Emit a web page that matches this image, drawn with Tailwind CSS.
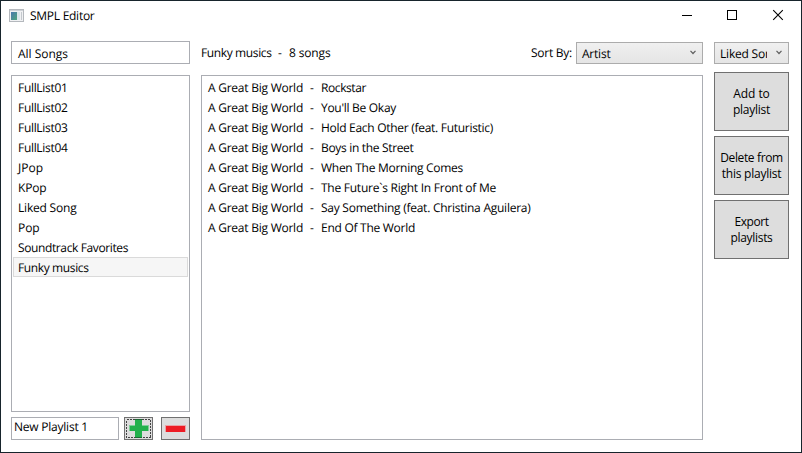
<!DOCTYPE html>
<html lang="en">
<head>
<meta charset="utf-8">
<title>SMPL Editor</title>
<script src="https://cdn.jsdelivr.net/npm/@tailwindcss/browser@4"></script>
</head>
<body class="w-[802px] h-[453px] overflow-hidden bg-white text-black font-['Open_Sans','Noto_Sans',sans-serif] text-[12px] leading-4 [text-rendering:geometricPrecision]">
<div class="w-[802px] h-[453px] border border-[#17242c] bg-white flex flex-col">
  <header class="h-[30px] flex items-center justify-between pl-2">
    <div class="flex items-center">
      <svg class="w-4 h-4" viewBox="0 -1 16 16" shape-rendering="crispEdges">
        <defs><linearGradient id="g" x1="0" y1="0" x2="1" y2="1"><stop offset="0" stop-color="#4a78ae"/><stop offset="1" stop-color="#4fa57c"/></linearGradient></defs>
        <rect x="0.5" y="0.5" width="14" height="12" fill="#f0f1f3" stroke="#b4b8bd"/>
        <rect x="1" y="1" width="13" height="1" fill="#cdd1d6"/>
        <rect x="2" y="3" width="6" height="8" fill="url(#g)"/>
        <rect x="8" y="3" width="3" height="8" fill="#dbe6ea"/>
        <rect x="12" y="3" width="1" height="8" fill="#c3c8cd"/>
      </svg>
      <span class="ml-[5px] whitespace-pre" data-w="64.5">SMPL Editor</span>
    </div>
    <div class="flex h-full -mr-px">
      <svg class="w-[46px] h-[30px]" viewBox="0 0 46 30" fill="none" stroke="#000"><path d="M18 14.5h10"/></svg>
      <svg class="w-[46px] h-[30px]" viewBox="0 0 46 30" fill="none" stroke="#000"><rect x="17.5" y="9.5" width="9" height="9"/></svg>
      <svg class="w-[46px] h-[30px]" viewBox="0 0 46 30" fill="none" stroke="#000" stroke-width="1.1"><path d="M17.2 9.2l9.6 9.6M26.8 9.2l-9.6 9.6"/></svg>
    </div>
  </header>
  <main class="flex-1 flex gap-[11px] pl-[10px] pr-3 pt-[10px] pb-3">
    <aside class="w-[179px] flex flex-col">
      <div class="h-[23px] border border-[#abadb3] pl-[6px] pt-[4px]"><span class="whitespace-pre" data-w="50">All Songs</span></div>
      <ul class="mt-[11px] h-[337px] border border-[#abadb3] p-px">
        <li class="h-5 pl-[5px] pt-[3px]"><span class="whitespace-pre" data-w="49.5">FullList01</span></li>
        <li class="h-5 pl-[5px] pt-[3px]"><span class="whitespace-pre" data-w="49.5">FullList02</span></li>
        <li class="h-5 pl-[5px] pt-[3px]"><span class="whitespace-pre" data-w="49.5">FullList03</span></li>
        <li class="h-5 pl-[5px] pt-[3px]"><span class="whitespace-pre" data-w="49.5">FullList04</span></li>
        <li class="h-5 pl-[5px] pt-[3px]"><span class="whitespace-pre" data-w="25">JPop</span></li>
        <li class="h-5 pl-[5px] pt-[3px]"><span class="whitespace-pre" data-w="28.5">KPop</span></li>
        <li class="h-5 pl-[5px] pt-[3px]"><span class="whitespace-pre" data-w="58.5">Liked Song</span></li>
        <li class="h-5 pl-[5px] pt-[3px]"><span class="whitespace-pre" data-w="21.5">Pop</span></li>
        <li class="h-5 pl-[5px] pt-[3px]"><span class="whitespace-pre" data-w="110">Soundtrack Favorites</span></li>
        <li class="h-5 pl-1 pt-[2px] border border-[#dadada] bg-[#f6f6f6]"><span class="whitespace-pre" data-w="70.5">Funky musics</span></li>
      </ul>
      <div class="mt-[5px] flex h-[23px]">
        <div class="w-[108px] border border-[#abadb3] pl-[2px] pt-px"><span class="whitespace-pre" data-w="74">New Playlist 1</span></div>
        <button class="ml-[5px] w-[29px] h-[23px]" aria-label="Add playlist"><svg class="block" width="29" height="23" viewBox="0 0 29 23" shape-rendering="crispEdges">
          <rect x=".5" y=".5" width="28" height="22" fill="#ddd" stroke="#707070"/>
          <path d="M11 2h7v6h7v6h-7v7h-7v-7H5V8h6z" fill="#7fce98"/>
          <path d="M11 3h7v6h6v5h-6v6h-7v-6H6V9h5z" fill="#22b14c"/>
          <rect x="2.5" y="2.5" width="24" height="18" fill="none" stroke="#444" stroke-dasharray="2 1"/>
          <path d="M11 2h7v1h-7zM11 20h7v1h-7z" fill="#1c6b34"/>
        </svg></button>
        <button class="ml-2 w-[29px] h-[23px]" aria-label="Remove playlist"><svg class="block" width="29" height="23" viewBox="0 0 29 23" shape-rendering="crispEdges">
          <rect x=".5" y=".5" width="28" height="22" fill="#ddd" stroke="#707070"/>
          <rect x="4" y="8" width="21" height="7" fill="#e9a3a6"/>
          <rect x="5" y="9" width="19" height="6" fill="#ed1c24"/>
        </svg></button>
      </div>
    </aside>
    <section class="w-[502px] flex flex-col">
      <div class="h-[23px] flex">
        <div class="flex pt-1 whitespace-pre"><span class="w-[77px]" data-w="70.5">Funky musics</span><span class="w-[11px]">-</span><span data-w="41.5">8 songs</span></div>
        <span class="ml-auto mr-1 self-start pt-1 whitespace-pre" data-w="41">Sort By:</span>
        <div class="mt-px w-[127px] h-[22px] border border-[#acacac] bg-linear-to-b from-[#f0f0f0] to-[#e5e5e5] pl-[5px] pr-[6px] flex justify-between">
          <span class="pt-[3px] whitespace-pre" data-w="28.5">Artist</span>
          <svg class="mt-[7px] w-[6px] h-[5px]" viewBox="0 0 6 5" fill="none" stroke="#606060" stroke-width="1.2"><path d="M.5 .8L3 3.5 5.5 .8"/></svg>
        </div>
      </div>
      <ul class="mt-[11px] h-[365px] border border-[#abadb3] p-px">
        <li class="h-5 flex pl-[5px] pt-[3px] whitespace-pre"><span class="w-[102px]" data-w="95">A Great Big World</span><span class="w-[11px]">-</span><span data-w="45">Rockstar</span></li>
        <li class="h-5 flex pl-[5px] pt-[3px] whitespace-pre"><span class="w-[102px]" data-w="95">A Great Big World</span><span class="w-[11px]">-</span><span data-w="75">You'll Be Okay</span></li>
        <li class="h-5 flex pl-[5px] pt-[3px] whitespace-pre"><span class="w-[102px]" data-w="95">A Great Big World</span><span class="w-[11px]">-</span><span data-w="172">Hold Each Other (feat. Futuristic)</span></li>
        <li class="h-5 flex pl-[5px] pt-[3px] whitespace-pre"><span class="w-[102px]" data-w="95">A Great Big World</span><span class="w-[11px]">-</span><span data-w="92.5">Boys in the Street</span></li>
        <li class="h-5 flex pl-[5px] pt-[3px] whitespace-pre"><span class="w-[102px]" data-w="95">A Great Big World</span><span class="w-[11px]">-</span><span data-w="142">When The Morning Comes</span></li>
        <li class="h-5 flex pl-[5px] pt-[3px] whitespace-pre"><span class="w-[102px]" data-w="95">A Great Big World</span><span class="w-[11px]">-</span><span data-w="175">The Future`s Right In Front of Me</span></li>
        <li class="h-5 flex pl-[5px] pt-[3px] whitespace-pre"><span class="w-[102px]" data-w="95">A Great Big World</span><span class="w-[11px]">-</span><span data-w="209.5">Say Something (feat. Christina Aguilera)</span></li>
        <li class="h-5 flex pl-[5px] pt-[3px] whitespace-pre"><span class="w-[102px]" data-w="95">A Great Big World</span><span class="w-[11px]">-</span><span data-w="94">End Of The World</span></li>
      </ul>
    </section>
    <aside class="w-[75px] flex flex-col gap-[5px] pt-px">
      <div class="mb-[3px] w-[75px] h-[22px] border border-[#acacac] bg-linear-to-b from-[#f0f0f0] to-[#e5e5e5] pl-[5px] pr-[6px] flex justify-between">
        <div class="w-[47px] overflow-hidden pt-[3px]"><span class="whitespace-pre" data-w="58.5">Liked Song</span></div>
        <svg class="mt-[7px] w-[6px] h-[5px]" viewBox="0 0 6 5" fill="none" stroke="#606060" stroke-width="1.2"><path d="M.5 .8L3 3.5 5.5 .8"/></svg>
      </div>
      <button class="h-[59px] border border-[#707070] bg-[#ddd] flex flex-col items-center justify-center pt-px"><span data-w="36.5">Add to</span><span data-w="37">playlist</span></button>
      <button class="h-[59px] border border-[#707070] bg-[#ddd] flex flex-col items-center justify-center pt-px whitespace-nowrap"><span data-w="62.5">Delete from</span><span data-w="59.5">this playlist</span></button>
      <button class="h-[59px] border border-[#707070] bg-[#ddd] flex flex-col items-center justify-center pt-px"><span data-w="34">Export</span><span data-w="42">playlists</span></button>
    </aside>
  </main>
</div>
<script>
// Track each label to its design width, again whenever styles or fonts arrive.
function fit() {
  document.querySelectorAll('[data-w]').forEach(function (el) {
    el.style.letterSpacing = '0px';
    var range = document.createRange();
    range.selectNodeContents(el);
    var natural = range.getBoundingClientRect().width;
    el.style.letterSpacing = (parseFloat(el.dataset.w) - natural) / el.textContent.length + 'px';
  });
}
fit();
window.addEventListener('load', fit);
document.fonts.ready.then(fit);
new ResizeObserver(fit).observe(document.body);
</script>
</body>
</html>
